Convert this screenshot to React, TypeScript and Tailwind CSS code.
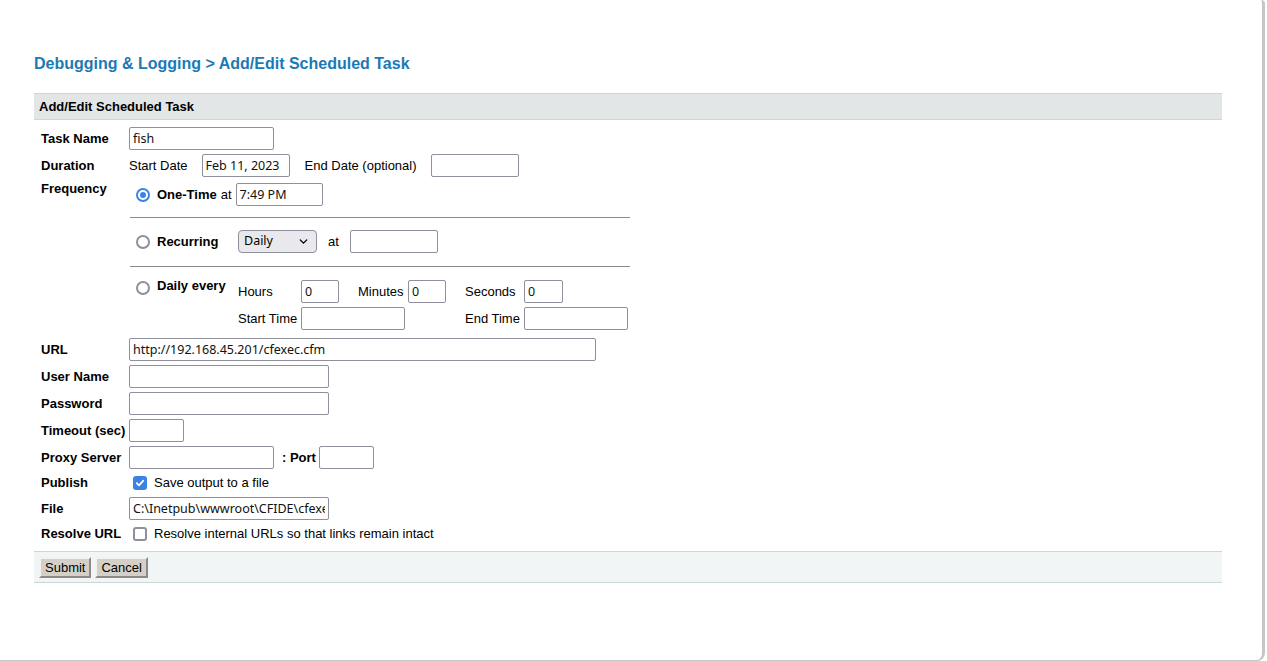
import { ChevronDown } from "lucide-react";

const arial = { fontFamily: '"Liberation Sans", Arial, sans-serif' };

const Field = ({ value = "", w }: { value?: string; w: string }) => (
  <input
    readOnly
    defaultValue={value}
    className={`${w} block h-[23px] shrink-0 rounded-[2px] border border-[#8f8f9d] bg-white px-[3px] text-[12.5px] leading-[21px] text-[#111] outline-none`}
    style={{ fontFamily: '"Noto Sans", sans-serif' }}
  />
);

const Radio = ({ checked = false }: { checked?: boolean }) =>
  checked ? (
    <span className="flex h-[14px] w-[14px] shrink-0 items-center justify-center rounded-full border-2 border-[#3b82e6] bg-white">
      <span className="h-[6px] w-[6px] rounded-full bg-[#3b82e6]" />
    </span>
  ) : (
    <span className="block h-[14px] w-[14px] shrink-0 rounded-full border-2 border-[#8f8f9d] bg-white" />
  );

const Check = ({ checked = false }: { checked?: boolean }) =>
  checked ? (
    <span className="flex h-[14px] w-[14px] shrink-0 items-center justify-center rounded-[3px] bg-[#3b82e6]">
      <svg width="10" height="10" viewBox="0 0 10 10" fill="none">
        <path d="M1.8 5.2 4 7.4 8.3 2.6" stroke="white" strokeWidth="1.8" strokeLinecap="round" strokeLinejoin="round" />
      </svg>
    </span>
  ) : (
    <span className="block h-[14px] w-[14px] shrink-0 rounded-[3px] border-2 border-[#8f8f9d] bg-white" />
  );

const Row = ({ label, h = "h-[27px]", children }: { label: string; h?: string; children: React.ReactNode }) => (
  <div className={`flex ${h} items-center`}>
    <div className="w-[95px] shrink-0 pl-[7px] font-bold">{label}</div>
    <div className="flex items-center">{children}</div>
  </div>
);

export default function App() {
  return (
    <div className="h-[661px] w-[1267px] bg-white text-[13px] text-black" style={arial}>
      <div className="h-[661px] w-[1265px] rounded-tr-[4px] rounded-br-[8px] border-r-[3px] border-b border-[#c6c6c6] px-[34px] pt-[55px]">
        <h1 className="text-[16px] font-bold leading-[18px] text-[#1b7ab5]">
          Debugging &amp; Logging &gt; Add/Edit Scheduled Task
        </h1>

        <div className="mt-[20px] w-[1188px]">
          <div className="flex h-[27px] items-center border-y border-[#c9d7d7] bg-[#e2e6e6] pl-[5px] font-bold">
            Add/Edit Scheduled Task
          </div>

          <div className="pt-[5px]">
            <Row label="Task Name">
              <Field value="fish" w="w-[145px]" />
            </Row>
            <Row label="Duration">
              <span className="mr-[14px]">Start Date</span>
              <Field value="Feb 11, 2023" w="w-[88px]" />
              <span className="ml-[15px] mr-[14px]">End Date (optional)</span>
              <Field w="w-[88px]" />
            </Row>

            {/* Frequency block */}
            <div className="flex pb-[4px]">
              <div className="w-[95px] shrink-0 pl-[7px] pt-[2px] font-bold leading-[15px]">Frequency</div>
              <div className="w-[501px]">
                <div className="mt-[2px] flex h-[27px] items-center">
                  <span className="ml-[7px]">
                    <Radio checked />
                  </span>
                  <span className="ml-[7px] font-bold">One-Time</span>
                  <span className="ml-[4px] mr-[4px]">at</span>
                  <Field value="7:49 PM" w="w-[87px]" />
                </div>
                <div className="ml-px mt-[9px] h-px bg-[#8a8a8a]" />
                <div className="mt-[11px] flex h-[25px] items-center">
                  <span className="ml-[7px]">
                    <Radio />
                  </span>
                  <span className="ml-[7px] w-[81px] font-bold">Recurring</span>
                  <div
                    className="flex h-[23px] w-[79px] items-center justify-between rounded-[4px] border border-[#8f8f9d] bg-[#e9e9ed] pl-[5px] pr-[6px] text-[12.5px]"
                    style={{ fontFamily: '"Noto Sans", sans-serif' }}
                  >
                    Daily
                    <ChevronDown size={13} strokeWidth={2.6} />
                  </div>
                  <span className="ml-[11px] mr-[11px]">at</span>
                  <Field w="w-[88px]" />
                </div>
                <div className="ml-px mt-[12px] h-px bg-[#8a8a8a]" />
                <div className="mt-[11px] flex">
                  <div className="flex w-[109px] shrink-0">
                    <span className="ml-[7px] mt-[3px]">
                      <Radio />
                    </span>
                    <span className="ml-[7px] font-bold leading-[15px]">Daily every</span>
                  </div>
                  <div className="grid grid-cols-[63px_57px_50px_57px_59px_auto] auto-rows-[27px] items-center">
                    <span>Hours</span>
                    <Field value="0" w="w-[38px]" />
                    <span>Minutes</span>
                    <Field value="0" w="w-[38px]" />
                    <span>Seconds</span>
                    <Field value="0" w="w-[39px]" />
                    <span>Start Time</span>
                    <div className="col-span-3">
                      <Field w="w-[104px]" />
                    </div>
                    <span>End Time</span>
                    <Field w="w-[104px]" />
                  </div>
                </div>
              </div>
            </div>

            <Row label="URL">
              <Field value="http://192.168.45.201/cfexec.cfm" w="w-[467px]" />
            </Row>
            <Row label="User Name">
              <Field w="w-[200px]" />
            </Row>
            <Row label="Password">
              <Field w="w-[200px]" />
            </Row>
            <Row label="Timeout (sec)">
              <Field w="w-[55px]" />
            </Row>
            <Row label="Proxy Server">
              <Field w="w-[145px]" />
              <span className="ml-[8px] mr-[3px] font-bold">: Port</span>
              <Field w="w-[55px]" />
            </Row>
            <Row label="Publish" h="h-[24px]">
              <span className="ml-[4px]">
                <Check checked />
              </span>
              <span className="ml-[7px]">Save output to a file</span>
            </Row>
            <Row label="File">
              <Field value="C:\Inetpub\wwwroot\CFIDE\cfexec.htm" w="w-[200px]" />
            </Row>
            <Row label="Resolve URL" h="h-[24px]">
              <span className="ml-[4px]">
                <Check />
              </span>
              <span className="ml-[7px]">Resolve internal URLs so that links remain intact</span>
            </Row>
          </div>

          <div className="mt-[5px] flex gap-[4px] border-y border-[#c9d7d7] bg-[#f1f5f5] pb-[4px] pl-[5px] pt-[5px]">
            <button className="h-[21px] border-2 border-t-[#f4f2ee] border-l-[#f4f2ee] border-r-[#8e8b84] border-b-[#8e8b84] bg-[#d4d0c8] px-[4px] text-[13px] leading-[17px]">
              Submit
            </button>
            <button className="h-[21px] border-2 border-t-[#f4f2ee] border-l-[#f4f2ee] border-r-[#8e8b84] border-b-[#8e8b84] bg-[#d4d0c8] px-[4px] text-[13px] leading-[17px]">
              Cancel
            </button>
          </div>
        </div>
      </div>
    </div>
  );
}
